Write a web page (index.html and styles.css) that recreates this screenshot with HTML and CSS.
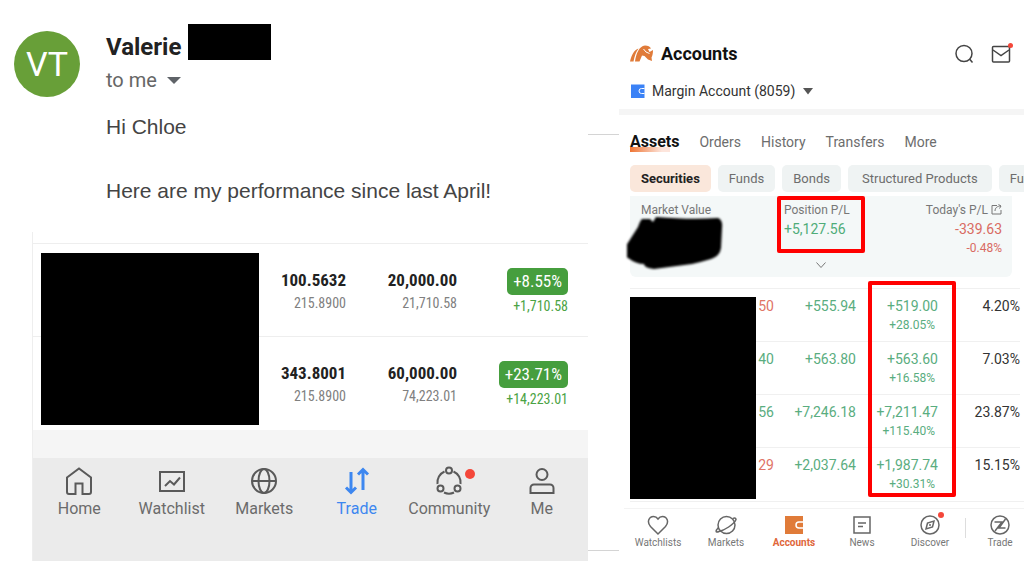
FILE: index.html
```
<!DOCTYPE html>
<html lang="en">
<head>
    <meta charset="UTF-8">
    <meta name="viewport" content="width=device-width, initial-scale=1">
    <title>Performance</title>
    <link rel="stylesheet" href="styles.css">
</head>
<body>
    <div class="page">
        <section class="message">
            <header class="sender">
                <div class="avatar">VT</div>
                <div>
                    <div class="sender-name">Valerie <span class="redacted-name"></span></div>
                    <button type="button" class="to-me">to me
                        <svg width="14" height="7" viewBox="0 0 14 7"><path d="M0 0h14L7 7z" fill="#5f6368"/></svg>
                    </button>
                </div>
            </header>
            <div class="body-text">
                <p>Hi Chloe</p>
                <p>Here are my performance since last April!</p>
            </div>

            <div class="broker">
                <div class="positions">
                    <table>
                        <tr>
                            <td></td>
                            <td><b>100.5632</b><span>215.8900</span></td>
                            <td><b>20,000.00</b><span>21,710.58</span></td>
                            <td class="gain"><em>+8.55%</em><span>+1,710.58</span></td>
                        </tr>
                        <tr>
                            <td></td>
                            <td><b>343.8001</b><span>215.8900</span></td>
                            <td><b>60,000.00</b><span>74,223.01</span></td>
                            <td class="gain"><em>+23.71%</em><span>+14,223.01</span></td>
                        </tr>
                    </table>
                    <div class="redacted-positions"></div>
                </div>
                <nav class="broker-nav">
                    <a href="#">
                        <svg width="30" height="30" viewBox="0 0 30 30"><path d="M3 11.500 15 2.500l12 9V26a2 2 0 0 1-2 2h-6.500V17.500h-7V28H5a2 2 0 0 1-2-2z"/></svg>
                        Home
                    </a>
                    <a href="#">
                        <svg width="30" height="30" viewBox="0 0 30 30"><path d="M3 6h24v19H3z"/><path d="m8 20 5-5 4 3.500 6-7"/></svg>
                        Watchlist
                    </a>
                    <a href="#">
                        <svg width="30" height="30" viewBox="0 0 30 30"><circle cx="15" cy="15" r="12"/><ellipse cx="15" cy="15" rx="5.500" ry="12"/><path d="M3 15h24"/></svg>
                        Markets
                    </a>
                    <a href="#" class="active">
                        <svg width="30" height="30" viewBox="0 0 30 30"><path d="M9 6v20M4 21.500l5 5 5-5M21 24V4M16 8.500l5-5 5 5"/></svg>
                        Trade
                    </a>
                    <a href="#">
                        <svg width="30" height="30" viewBox="0 0 30 30"><circle cx="15" cy="4.500" r="3"/><circle cx="6.500" cy="22.500" r="3"/><circle cx="23.500" cy="22.500" r="3"/><path d="M10.500 5.500A12 12 0 0 0 3.500 18M19.500 5.500A12 12 0 0 1 26.500 18M10 26.500a12 12 0 0 0 10 0"/></svg>
                        <i class="dot"></i>
                        Community
                    </a>
                    <a href="#">
                        <svg width="30" height="30" viewBox="0 0 30 30"><circle cx="15" cy="8.500" r="5.500"/><path d="M3.500 27v-5a3.500 3.500 0 0 1 3.500-3.500h16a3.500 3.500 0 0 1 3.500 3.500v5z"/></svg>
                        Me
                    </a>
                </nav>
            </div>
        </section>

        <div class="gutter"><hr><hr></div>

        <section class="accounts">
            <header class="topbar">
                <svg width="24" height="18" viewBox="0 0 24 18">
                    <g fill="#e07b39">
                        <path d="M0 16.500C1.500 10 4 5 8.500 3.500 6 7 4.500 11 3.500 16.500z"/>
                        <path d="M5 16.500C6 9 9 1 15 .5c3 0 5 1 6 3l-3 .5 1.500 3 3.500-2c0 3-.5 5.500-1.500 7.500l.5 3.500-4-1.500-3.500-3.500-2.500-.5-2.500 6z"/>
                    </g>
                    <path d="M13.500 4l2.500 3 3.500 1.500" fill="none" stroke="#fff" stroke-width="1"/>
                </svg>
                <h1>Accounts</h1>
                <button type="button" aria-label="Search">
                    <svg width="20" height="20" viewBox="0 0 20 20"><circle cx="10" cy="9.500" r="8"/><path d="m15.500 15 3 3.500"/></svg>
                </button>
                <button type="button" aria-label="Messages">
                    <svg width="20" height="20" viewBox="0 0 20 20"><rect x="1.500" y="2.500" width="17" height="15.500" rx="1"/><path d="m2 6 8 5.500L18 6"/></svg>
                    <i class="dot"></i>
                </button>
            </header>
            <div class="account-picker">
                <svg width="14" height="14" viewBox="0 0 14 14"><path fill="#3b82f6" d="M0 .5h13.500V14H0z"/><path d="M13.500 4.500h-3a2.500 2.500 0 0 0 0 5h3" fill="none" stroke="#fff"/></svg>
                <select aria-label="Account"><option>Margin Account (8059)</option></select>
                <svg width="10" height="7" viewBox="0 0 10 7"><path d="M0 0h10L5 6.500z" fill="#555"/></svg>
            </div>
            <nav class="tabs">
                <a href="#" class="active">Assets</a>
                <a href="#">Orders</a>
                <a href="#">History</a>
                <a href="#">Transfers</a>
                <a href="#">More</a>
            </nav>
            <div class="chips">
                <button type="button" class="selected">Securities</button>
                <button type="button">Funds</button>
                <button type="button">Bonds</button>
                <button type="button" class="wide">Structured Products</button>
                <button type="button">Fu</button>
            </div>
            <div class="summary">
                <div class="market-value">
                    <div>Market Value</div>
                    <svg class="scribble" width="100" height="60" viewBox="0 0 100 60"><path d="M15 7h8l3 3 3-5q35 3 62 1 5 2 4 10l-1 20q-1 8-10 11-10 3-19 5l-38 5q-10-1-10-5-8 0-16-6-5-2-4-9L11 15q2-6 4-8z"/></svg>
                </div>
                <div class="position">
                    <div>Position P/L</div>
                    <div class="amount up">+5,127.56</div>
                    <span class="mark"></span>
                </div>
                <div class="today">
                    <div>Today's P/L
                        <svg width="11" height="11" viewBox="0 0 11 11"><path d="M6 1.500H1v8.500h9V6M4 7c0-3 2-5 6-5M7.500.5 10 2 8.500 4.500"/></svg>
                    </div>
                    <div class="amount down">-339.63</div>
                    <div class="down">-0.48%</div>
                </div>
                <button type="button" class="expand" aria-label="Show more">
                    <svg width="12" height="8" viewBox="0 0 12 8"><path d="m1.500 1.500 4.500 5 4.500-5"/></svg>
                </button>
            </div>
            <div class="holdings">
                <table>
                    <tr><td class="down">50</td><td>+555.94</td><td>+519.00<small>+28.05%</small></td><td class="share">4.20%</td></tr>
                    <tr><td>40</td><td>+563.80</td><td>+563.60<small>+16.58%</small></td><td class="share">7.03%</td></tr>
                    <tr><td>56</td><td>+7,246.18</td><td>+7,211.47<small>+115.40%</small></td><td class="share">23.87%</td></tr>
                    <tr><td class="down">29</td><td>+2,037.64</td><td>+1,987.74<small>+30.31%</small></td><td class="share">15.15%</td></tr>
                </table>
                <div class="redacted-holdings"></div>
                <span class="mark"></span>
            </div>
            <nav class="accounts-nav">
                <a href="#">
                    <svg width="22" height="22" viewBox="0 0 22 22"><path d="M11 20 3.500 12.500C-.5 8 2 2.500 6.500 2.500c2 0 3.500 1 4.500 2.500 1-1.500 2.500-2.500 4.500-2.500 4.500 0 7 5.500 3 10z"/></svg>
                    Watchlists
                </a>
                <a href="#">
                    <svg width="22" height="22" viewBox="0 0 22 22"><circle cx="11.500" cy="11" r="8.500"/><path d="M3.500 13.500C0 17 .5 19 4 17.500c5-1 15-7 17-12 0-2-2-1.500-3-1"/></svg>
                    Markets
                </a>
                <a href="#" class="active">
                    <svg width="22" height="22" viewBox="0 0 22 22"><path class="fill" d="M2 2h18v18H2z"/><path class="clasp" d="M20 8h-4a3 3 0 0 0 0 6h4"/></svg>
                    Accounts
                </a>
                <a href="#">
                    <svg width="22" height="22" viewBox="0 0 22 22"><path d="M3 3h16v16H3zM7 9h8M7 12.500h5"/></svg>
                    News
                </a>
                <a href="#">
                    <svg width="22" height="22" viewBox="0 0 22 22"><circle cx="11" cy="11" r="9"/><path d="m15 7-1.500 6L7 15l1.500-6zM11 10v2"/></svg>
                    <i class="dot"></i>
                    Discover
                </a>
                <a href="#" class="trade">
                    <svg width="22" height="22" viewBox="0 0 22 22"><circle cx="11" cy="11" r="9"/><path d="M5.500 8H13L6 17M16.500 14H10l6.500-9"/></svg>
                    Trade
                </a>
            </nav>
        </section>
    </div>
</body>
</html>
```
FILE: styles.css
```
* {
    box-sizing: border-box;
}
body {
    background: #fff;
    font-family: Roboto, Arial, sans-serif;
    margin: 0;
}
button, select {
    font-family: inherit;
    background: none;
    border: none;
    padding: 0;
    cursor: pointer;
}
a {
    color: inherit;
    text-decoration: none;
}
svg {
    display: block;
    flex: none;
}
table {
    width: 100%;
    border-collapse: collapse;
    table-layout: fixed;
}
.page {
    display: grid;
    grid-template-columns: 588fr 31fr 405fr;
    min-height: 100vh;
}
.dot {
    position: absolute;
    background: #f4473a;
    border-radius: 50%;
}
.up {
    color: #4fac78;
}
.down {
    color: #e07466;
}
.mark {
    position: absolute;
    border: 4px solid #f00;
    border-radius: 2px;
}

/* email */
.message {
    display: flex;
    flex-direction: column;
    min-width: 0;
}
.sender {
    display: flex;
    gap: 26px;
    padding: 24px 0 0 14px;
}
.avatar {
    width: 66px;
    height: 66px;
    margin-top: 7px;
    border-radius: 50%;
    background: #689f38;
    color: #fff;
    font-size: 34px;
    line-height: 66px;
    text-align: center;
}
.sender-name {
    display: flex;
    align-items: flex-start;
    gap: 7px;
    color: #222;
    font-size: 24px;
    line-height: 46px;
    font-weight: bold;
}
.redacted-name {
    width: 83px;
    height: 36px;
    background: #000;
}
.to-me {
    display: flex;
    align-items: center;
    gap: 10px;
    color: #666;
    font-size: 20px;
    line-height: 20px;
}
.body-text {
    padding: 14px 0 25px 106px;
    color: #444;
    font-family: "Liberation Sans", Arial, sans-serif;
    font-size: 21px;
    line-height: 32px;
}
.body-text p {
    margin: 0 0 32px;
}
.body-text p:last-child {
    margin: 0;
}

/* broker app in the email */
.broker {
    flex: 1;
    display: flex;
    flex-direction: column;
    margin-left: 32px;
    border-left: 1px solid #eee;
}
.positions {
    position: relative;
    padding-top: 11px;
    border-bottom: 28px solid #f5f5f5;
}
.positions tr {
    height: 93px;
    border-top: 1px solid #eee;
}
.positions td {
    width: 111px;
    padding: 24px 0 0;
    vertical-align: top;
    text-align: right;
    font-family: "Liberation Sans Narrow", "Roboto Condensed", Roboto, sans-serif;
}
.positions td:first-child {
    width: auto;
}
.positions td:last-child {
    width: 131px;
    padding-right: 20px;
}
.positions b {
    display: block;
    color: #222;
    font-size: 17px;
    line-height: 24px;
}
.positions span {
    display: block;
    color: #808080;
    font-size: 14px;
    line-height: 22px;
}
.positions em {
    display: inline-block;
    padding: 0 6px;
    border-radius: 5px;
    background: #469e3e;
    color: #fff;
    font-size: 17px;
    line-height: 27px;
    font-style: normal;
}
.positions .gain span {
    color: #4ba344;
}
.redacted-positions {
    position: absolute;
    left: 8px;
    top: 21px;
    bottom: 5px;
    width: 218px;
    background: #000;
}
.broker-nav {
    flex: 1;
    display: flex;
    padding-top: 8px;
    background: #ebebeb;
}
.broker-nav a {
    position: relative;
    flex: 1;
    display: flex;
    flex-direction: column;
    align-items: center;
    gap: 2px;
    color: #6b6b6b;
    font-size: 16px;
    line-height: 22px;
}
.broker-nav svg {
    fill: none;
    stroke: #5a5a5a;
    stroke-width: 2;
}
.broker-nav .active {
    color: #3d87f0;
}
.broker-nav .active svg {
    stroke: #3d87f0;
    stroke-width: 3;
}
.broker-nav .dot {
    top: 3px;
    left: 62px;
    width: 10px;
    height: 10px;
}
.gutter {
    display: flex;
    flex-direction: column;
    justify-content: space-between;
    padding: 134px 0 10px;
}
.gutter hr {
    width: 100%;
    height: 1px;
    margin: 0;
    border: none;
    background: #d4d4d4;
}

/* accounts app */
.accounts {
    min-width: 0;
    overflow: hidden;
}
.topbar {
    display: flex;
    align-items: center;
    gap: 7px;
    padding: 40px 13px 0 11px;
}
.topbar h1 {
    flex: 1;
    margin: 0;
    color: #111;
    font-size: 18px;
    line-height: 28px;
}
.topbar button {
    position: relative;
    margin-left: 10px;
}
.topbar button svg {
    fill: none;
    stroke: #444;
    stroke-width: 1.5;
}
.topbar .dot {
    top: -1px;
    right: -2px;
    width: 5px;
    height: 5px;
}
.account-picker {
    display: flex;
    align-items: center;
    padding: 11px 12px 6px;
    border-bottom: 6px solid #f5f5f5;
}
.account-picker select {
    appearance: none;
    margin: 0 7px;
    color: #333;
    font-size: 14px;
    line-height: 24px;
}
.tabs {
    display: flex;
    gap: 20px;
    padding: 15px 11px 11px;
    color: #6d6d6d;
    font-size: 14px;
    line-height: 24px;
}
.tabs .active {
    color: #111;
    font-size: 16px;
    font-weight: bold;
    background: linear-gradient(to right, #ee7433, #fde5dc 80%) 0 17px / 40px 5px no-repeat;
}
.chips {
    display: flex;
    gap: 7px;
    padding-left: 11px;
}
.chips button {
    flex: none;
    padding: 0 11px;
    border-radius: 5px;
    background: #eff3f3;
    color: #6d6d6d;
    font-size: 13px;
    line-height: 27px;
}
.chips .wide {
    padding: 0 14px;
}
.chips .selected {
    background: #fae7db;
    color: #222;
    font-weight: bold;
}
.summary {
    position: relative;
    display: grid;
    grid-template-columns: 143fr 110fr 108fr;
    height: 81px;
    margin: 4px 12px 11px 11px;
    padding: 5px 10px 0 11px;
    border-radius: 0 0 6px 6px;
    background: #f4f8f8;
    color: #777;
    font-size: 12px;
    line-height: 19px;
}
.summary .amount {
    font-size: 14px;
}
.summary svg {
    fill: none;
    stroke: #777;
}
.market-value, .position {
    position: relative;
}
.summary .scribble {
    position: absolute;
    left: -14px;
    top: 11px;
    fill: #000;
    stroke: none;
    filter: blur(1px);
}
.position .mark {
    left: -7px;
    top: -5px;
    width: 88px;
    height: 57px;
}
.today {
    text-align: right;
}
.today .down {
    color: #d96b62;
}
.today svg {
    display: inline-block;
    vertical-align: -1px;
}
.summary .expand {
    position: absolute;
    left: 50%;
    bottom: 8px;
    margin-left: -6px;
}
.holdings {
    position: relative;
    margin-left: 11px;
    padding-right: 4px;
    border-bottom: 1px solid #f0f0f0;
}
.holdings tr {
    height: 53px;
    border-top: 1px solid #f0f0f0;
}
.holdings td {
    width: 82px;
    padding: 8px 0 0;
    color: #5aad80;
    font-size: 14px;
    line-height: 19px;
    text-align: right;
    vertical-align: top;
}
.holdings td:first-child {
    width: auto;
}
.holdings .down {
    color: #e07466;
}
.holdings .share {
    color: #333;
}
.holdings small {
    display: block;
    padding-right: 3px;
    font-size: 12px;
    line-height: 18px;
}
.redacted-holdings {
    position: absolute;
    left: 0;
    top: 9px;
    bottom: 2px;
    width: 126px;
    background: #000;
}
.holdings .mark {
    top: -7px;
    right: 68px;
    bottom: 4px;
    width: 88px;
}
.accounts-nav {
    display: grid;
    grid-template-columns: repeat(5, 68fr) 60fr;
    margin: 6px 0 0 5px;
    padding-top: 5px;
    border-top: 1px solid #f3f3f3;
}
.accounts-nav a {
    position: relative;
    display: flex;
    flex-direction: column;
    align-items: center;
    color: #777;
    font-size: 10px;
    line-height: 14px;
}
.accounts-nav svg {
    fill: none;
    stroke: #666;
    stroke-width: 1.5;
}
.accounts-nav .active {
    color: #e0663a;
    font-weight: bold;
}
.accounts-nav .fill {
    fill: #e07b39;
    stroke: none;
}
.accounts-nav .clasp {
    stroke: #fff;
}
.accounts-nav .dot {
    top: -2px;
    left: 42px;
    width: 6px;
    height: 6px;
}
.accounts-nav .trade {
    padding-left: 12px;
    background: linear-gradient(#ddd, #ddd) 1px 4px / 1px 20px no-repeat;
}
```
